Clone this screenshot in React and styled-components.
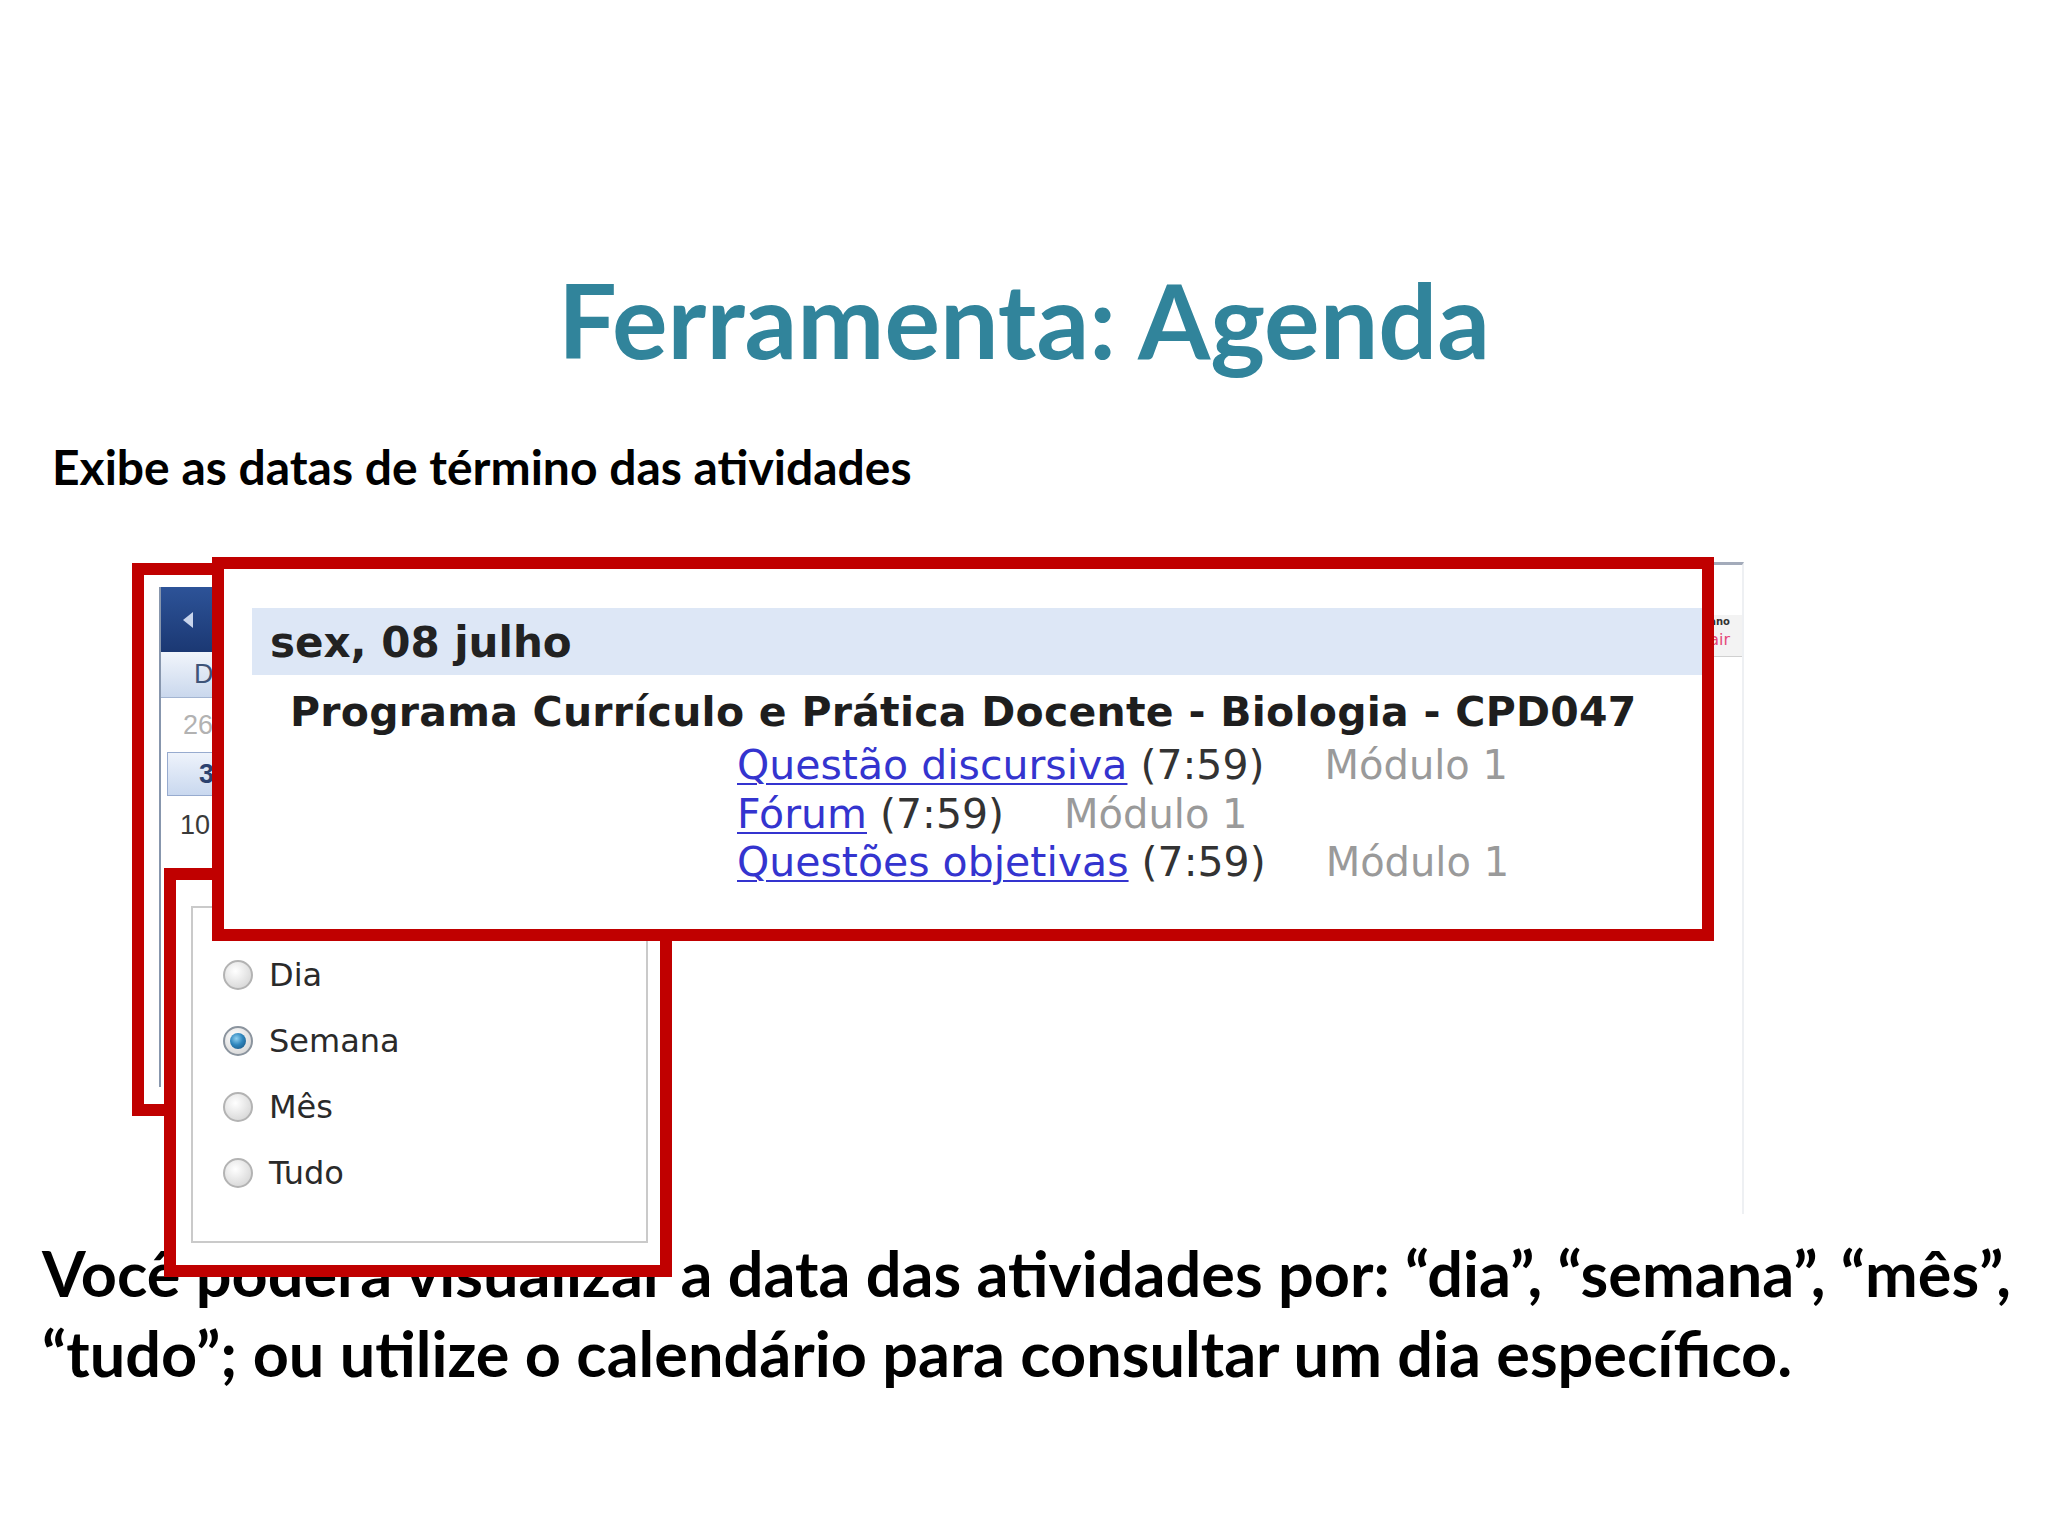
import React from "react";
import styled, { createGlobalStyle } from "styled-components";

const Global = createGlobalStyle`
  html, body { margin: 0; padding: 0; background: #ffffff; }
  * { box-sizing: border-box; }
`;

const Slide = styled.div`
  width: 2048px;
  height: 1536px;
  overflow: hidden;
  background: #ffffff;
  display: flex;
  flex-direction: column;
  font-family: Lato, "Open Sans", sans-serif;
`;

const Title = styled.h1`
  margin: 267px 0 0;
  font-size: 104px;
  line-height: 104px;
  font-weight: 700;
  text-align: center;
  color: #31849b;
`;

const Subtitle = styled.p`
  margin: 72px 0 0;
  padding-left: 52px;
  font-size: 48px;
  line-height: 48px;
  font-weight: 700;
  color: #000;
`;

const Figure = styled.div`
  position: relative;
  z-index: 2;
  margin-top: 49px;
  height: 737px;
  font-family: "DejaVu Sans", Verdana, sans-serif;
`;

const Bottom = styled.p`
  margin: -44px 0 0;
  padding-left: 42px;
  font-size: 63px;
  line-height: 80px;
  font-weight: 700;
  color: #000;
`;

/* ---------- screenshot behind callouts ---------- */
const ScreenBack = styled.div`
  position: absolute;
  left: 1000px;
  top: 22px;
  width: 744px;
  height: 652px;
  border-top: 3px solid #a3abba;
  border-right: 2px solid #eef0f3;
  background: #ffffff;
  z-index: 0;
  display: flex;
  flex-direction: column;
  align-items: flex-end;
`;

const UserBar = styled.div`
  margin-top: 50px;
  width: 120px;
  height: 42px;
  display: flex;
  flex-direction: column;
  align-items: flex-end;
  padding-right: 12px;
  background: #f3f3f3;
  border-bottom: 1px solid #d0d0d0;
`;

const UserName = styled.span`
  font-size: 10px;
  font-weight: 700;
  color: #333;
  line-height: 14px;
`;

const Logout = styled.span`
  font-size: 16px;
  color: #e5487a;
  line-height: 22px;
`;

/* ---------- callouts ---------- */
const Callout = styled.div`
  position: absolute;
  border: 12px solid #c00000;
  background: #ffffff;
  display: flex;
  flex-direction: column;
`;

const CalendarCallout = styled(Callout)`
  left: 132px;
  top: 23px;
  width: 300px;
  height: 553px;
  z-index: 1;
`;

const ViewCallout = styled(Callout)`
  left: 164px;
  top: 328px;
  width: 508px;
  height: 409px;
  z-index: 2;
`;

const EventsCallout = styled(Callout)`
  left: 212px;
  top: 17px;
  width: 1502px;
  height: 384px;
  z-index: 3;
`;

/* ---------- calendar ---------- */
const Calendar = styled.div`
  margin: 12px 0 0 15px;
  width: 260px;
  height: 500px;
  border-left: 2px solid #8796ad;
  display: flex;
  flex-direction: column;
  font-family: "Liberation Sans", Arial, sans-serif;
`;

const CalHeader = styled.div`
  height: 65px;
  background: linear-gradient(#2d5398, #1b3873);
  display: flex;
  align-items: center;
  padding-left: 22px;
`;

const ArrowLeft = styled.span`
  width: 0;
  height: 0;
  border-top: 8px solid transparent;
  border-bottom: 8px solid transparent;
  border-right: 10px solid #c9d5ec;
`;

const DayHead = styled.div`
  height: 46px;
  background: linear-gradient(#f1f5fb, #cad8ed);
  border-bottom: 1px solid #a3b5d2;
  display: flex;
  align-items: center;
  padding-left: 33px;
  font-size: 27px;
  color: #3e5478;
`;

const CalRow = styled.div`
  height: ${(p) => p.$h}px;
  display: flex;
  align-items: center;
  padding-left: ${(p) => p.$pad}px;
  font-size: 27px;
  color: ${(p) => p.$color};
`;

const SelectedRow = styled.div`
  margin: 0 0 2px 6px;
  height: 44px;
  border: 1px solid #97abcf;
  background: linear-gradient(#eef3fb, #c9d8ef);
  display: flex;
  align-items: center;
  padding-left: 31px;
  font-size: 27px;
  font-weight: 700;
  color: #2b416f;
`;

/* ---------- events ---------- */
const DateBand = styled.div`
  margin: 39px 0 0 28px;
  height: 67px;
  padding: 11px 0 0 18px;
  background: #dde7f6;
  font-size: 42px;
  line-height: 48px;
  font-weight: 700;
  color: #222;
`;

const CourseName = styled.div`
  margin: 13px 0 0 66px;
  font-size: 41px;
  line-height: 48px;
  letter-spacing: 0.25px;
  font-weight: 700;
  color: #1e1e1e;
  white-space: nowrap;
`;

const EventList = styled.div`
  margin: 5px 0 0 513px;
  display: flex;
  flex-direction: column;
  font-size: 41px;
  line-height: 48.5px;
`;

const EventLine = styled.div`
  display: flex;
  white-space: nowrap;
`;

const EventLink = styled.a`
  color: #3434cf;
  text-decoration: underline;
  text-decoration-thickness: 2px;
  text-underline-offset: 4px;
`;

const Time = styled.span`
  margin-left: 13px;
  color: #333;
`;

const Module = styled.span`
  margin-left: 60px;
  font-size: 40px;
  color: #9a9a9a;
`;

/* ---------- view options ---------- */
const OptionsPanel = styled.div`
  flex: 1;
  margin: 26px 12px 22px 15px;
  border: 2px solid #cacaca;
  padding: 34px 0 0 30px;
  display: flex;
  flex-direction: column;
`;

const OptionRow = styled.label`
  height: 66px;
  display: flex;
  align-items: center;
  gap: 16px;
  font-size: 32px;
  color: #2a2a2a;
`;

const Radio = styled.span`
  width: 30px;
  height: 30px;
  border-radius: 50%;
  border: 2px solid ${(p) => (p.$checked ? "#8b949e" : "#b3b3b3")};
  background: radial-gradient(circle at 40% 35%, #ffffff 0%, #e4e4e4 55%, #cfcfcf 100%);
  display: flex;
  align-items: center;
  justify-content: center;
  flex-shrink: 0;
  &::after {
    content: "";
    display: ${(p) => (p.$checked ? "block" : "none")};
    width: 16px;
    height: 16px;
    border-radius: 50%;
    background: radial-gradient(circle at 40% 35%, #8fd0f0 0%, #2f86bd 45%, #154d78 100%);
  }
`;

const events = [
  { name: "Questão discursiva", time: "(7:59)", mod: "Módulo 1" },
  { name: "Fórum", time: "(7:59)", mod: "Módulo 1" },
  { name: "Questões objetivas", time: "(7:59)", mod: "Módulo 1" },
];

const options = [
  { label: "Dia", checked: false },
  { label: "Semana", checked: true },
  { label: "Mês", checked: false },
  { label: "Tudo", checked: false },
];

export default function App() {
  return (
    <>
      <Global />
      <Slide>
        <Title>Ferramenta: Agenda</Title>
        <Subtitle>Exibe as datas de término das atividades</Subtitle>
        <Figure>
          <ScreenBack>
            <UserBar>
              <UserName>Fulano</UserName>
              <Logout>Sair</Logout>
            </UserBar>
          </ScreenBack>

          <CalendarCallout>
            <Calendar>
              <CalHeader>
                <ArrowLeft />
              </CalHeader>
              <DayHead>D</DayHead>
              <CalRow $h={54} $pad={22} $color="#b2b2b2">26</CalRow>
              <SelectedRow>3</SelectedRow>
              <CalRow $h={54} $pad={19} $color="#3a3a3a">10</CalRow>
            </Calendar>
          </CalendarCallout>

          <ViewCallout>
            <OptionsPanel>
              {options.map((o) => (
                <OptionRow key={o.label}>
                  <Radio $checked={o.checked} />
                  {o.label}
                </OptionRow>
              ))}
            </OptionsPanel>
          </ViewCallout>

          <EventsCallout>
            <DateBand>sex, 08 julho</DateBand>
            <CourseName>Programa Currículo e Prática Docente - Biologia - CPD047</CourseName>
            <EventList>
              {events.map((e) => (
                <EventLine key={e.name}>
                  <EventLink>{e.name}</EventLink>
                  <Time>{e.time}</Time>
                  <Module>{e.mod}</Module>
                </EventLine>
              ))}
            </EventList>
          </EventsCallout>
        </Figure>
        <Bottom>
          Você poderá visualizar a data das atividades por: “dia”, “semana”, “mês”,
          <br />
          “tudo”; ou utilize o calendário para consultar um dia específico.
        </Bottom>
      </Slide>
    </>
  );
}
